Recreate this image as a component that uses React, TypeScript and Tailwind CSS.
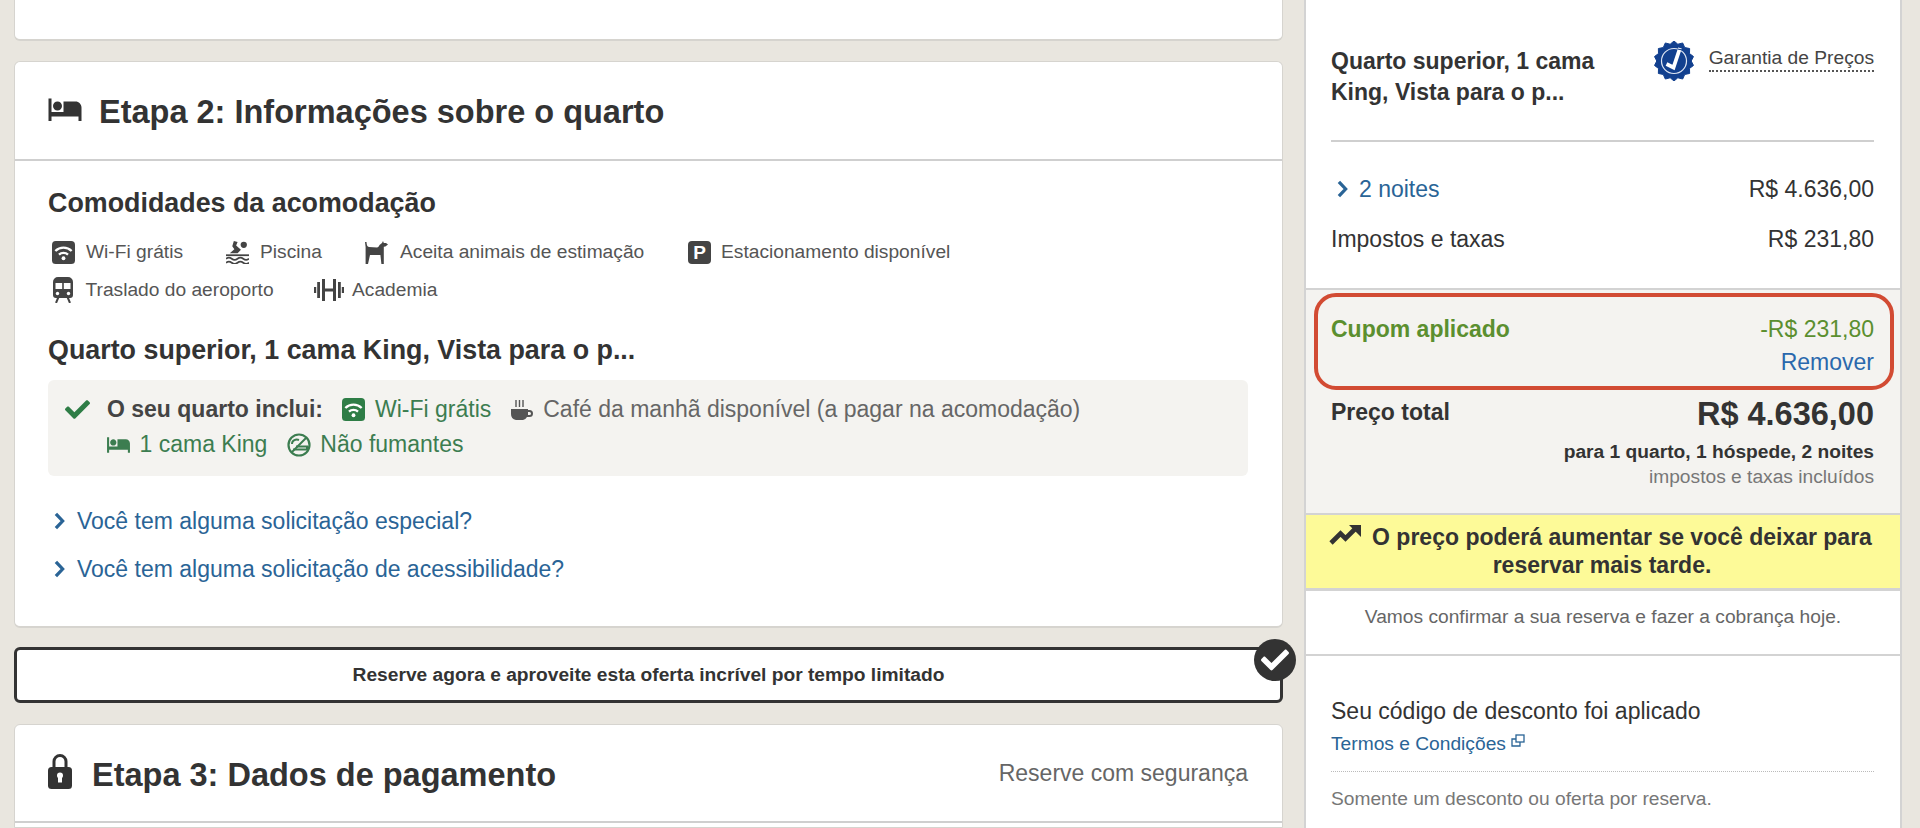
import { MdHotel } from "react-icons/md";
import { FaCheck } from "react-icons/fa";

function Wifi({ className }: { className?: string }) {
  return (
    <svg viewBox="0 0 24 24" className={className}>
      <rect x="0" y="0" width="24" height="24" rx="4" fill="currentColor" />
      <path d="M3.5 10.5a12 12 0 0 1 17 0" stroke="#fff" strokeWidth="2.4" fill="none" />
      <path d="M7.3 14.2a6.8 6.8 0 0 1 9.4 0" stroke="#fff" strokeWidth="2.4" fill="none" />
      <circle cx="12" cy="18" r="2" fill="#fff" />
    </svg>
  );
}

function Pool({ className }: { className?: string }) {
  return (
    <svg viewBox="0 0 22 22" className={className}>
      <circle cx="17" cy="3.6" r="3" fill="currentColor" />
      <path d="M7.5 0l3.6 1-1.4 3.2 4.6 4.2-3.2 3.2H3.6l4.4-3.6L6 5z" fill="currentColor" />
      <path d="M0 13.6h22" stroke="currentColor" strokeWidth="1.7" />
      <path
        d="M0 17c2-1.6 3.500-1.600 5.500 0s3.500 1.600 5.500 0 3.500-1.600 5.500 0 3.500 1.600 5.500 0M0 20.800c2-1.600 3.500-1.600 5.500 0s3.500 1.600 5.500 0 3.500-1.600 5.500 0 3.500 1.600 5.500 0"
        stroke="currentColor"
        strokeWidth="1.6"
        fill="none"
      />
    </svg>
  );
}

function Dog({ className }: { className?: string }) {
  return (
    <svg viewBox="0 0 23 23" className={className} fill="currentColor">
      <path d="M0 1h1.500c.2 3 .6 4.500 2.500 5l8 .5c1 0 2-1 2.500-2.500L17 2l1-2 .8 2H21l2 1.600-2.600 1.800-1.600.3V23h-2.400l-1-9H5l-2 9H.6V6z" />
    </svg>
  );
}

function Train({ className }: { className?: string }) {
  return (
    <svg viewBox="0 0 20 26" className={className} fill="currentColor">
      <path
        fillRule="evenodd"
        d="M5 0h10a5 5 0 0 1 5 5v13a3 3 0 0 1-3 3H3a3 3 0 0 1-3-3V5a5 5 0 0 1 5-5zM2.500 6v6h6.700V6zm8.300 0v6h6.700V6z"
      />
      <circle cx="4.500" cy="16.500" r="1.700" fill="#fff" />
      <circle cx="15.500" cy="16.500" r="1.700" fill="#fff" />
      <path d="M5.500 20 3 26M14.500 20l2.500 6" stroke="currentColor" strokeWidth="2" />
    </svg>
  );
}

function Gym({ className }: { className?: string }) {
  return (
    <svg viewBox="0 0 30 22" className={className} fill="currentColor">
      <rect x="0" y="8" width="2.200" height="6" />
      <rect x="3.200" y="3" width="2.800" height="16" />
      <rect x="8" y="0" width="3" height="22" />
      <rect x="11" y="9.500" width="8" height="3" />
      <rect x="19" y="0" width="3" height="22" />
      <rect x="24" y="3" width="2.800" height="16" />
      <rect x="27.800" y="8" width="2.200" height="6" />
    </svg>
  );
}

function Cup({ className }: { className?: string }) {
  return (
    <svg viewBox="0 0 24 24" className={className} fill="currentColor">
      <path d="M1 11h17v1h1.500a3.500 3.500 0 0 1 0 7H17a6 6 0 0 1-4 3H6a6 6 0 0 1-5-6zM18 14v3h1.500a1.500 1.500 0 0 0 0-3z" />
      <path d="M6 2v7M9.500 2v7M13 2v7" stroke="currentColor" strokeWidth="1.400" fill="none" />
    </svg>
  );
}

function NoSmoke({ className }: { className?: string }) {
  return (
    <svg viewBox="0 0 24 24" className={className} fill="none" stroke="currentColor">
      <circle cx="12" cy="12" r="10.500" strokeWidth="2.200" />
      <path d="M5 19 19 5" strokeWidth="2" />
      <path d="M9 13.500h11v3H6" strokeWidth="2" />
      <path d="M5 11c0-4 4-5 7-4" strokeWidth="2" />
    </svg>
  );
}

function Lock({ className }: { className?: string }) {
  return (
    <svg viewBox="0 0 24 35" className={className}>
      <path d="M6 14V7.500a6 6 0 0 1 12 0V14" stroke="currentColor" strokeWidth="3" fill="none" />
      <rect x="0" y="13" width="24" height="22" rx="3.500" fill="currentColor" />
      <circle cx="12" cy="21.500" r="3" fill="#fff" />
      <rect x="10" y="22" width="4" height="6.500" fill="#fff" />
    </svg>
  );
}

function Chevron({ className }: { className?: string }) {
  return (
    <svg viewBox="0 0 12 20" className={className} fill="none" stroke="currentColor" strokeWidth="3.600">
      <path d="M2 2l7.500 8L2 18" />
    </svg>
  );
}

function Trend({ className }: { className?: string }) {
  return (
    <svg viewBox="0 0 32 20" className={className}>
      <path d="M2 18l9.500-9.500 5 5L26 4" fill="none" stroke="currentColor" strokeWidth="4.600" />
      <path d="M20 0h12v12z" fill="currentColor" />
    </svg>
  );
}

const badgePoints = Array.from({ length: 28 }, (_, i) => {
  const r = i % 2 === 0 ? 20 : 17.2;
  const a = (i * Math.PI) / 14;
  return `${20 + r * Math.sin(a)},${20 - r * Math.cos(a)}`;
}).join(" ");

function Badge({ className }: { className?: string }) {
  return (
    <svg viewBox="0 0 40 40" className={className}>
      <polygon points={badgePoints} fill="#12408f" stroke="#12408f" strokeWidth="1" strokeLinejoin="round" />
      <circle cx="20" cy="20" r="12.500" fill="none" stroke="#dfe6f3" strokeWidth="1.200" />
      <path d="M12.500 23l7 3.500L26 7" fill="none" stroke="#fff" strokeWidth="3.800" />
      <path d="M23.500 8l5 1" fill="none" stroke="#12408f" strokeWidth="1.200" />
    </svg>
  );
}

function External({ className }: { className?: string }) {
  return (
    <svg viewBox="0 0 14 14" className={className} fill="none" stroke="currentColor" strokeWidth="1.300">
      <rect x="5" y="1" width="8" height="7" />
      <path d="M5 5H1v7h8V8" />
    </svg>
  );
}

function Parking({ className }: { className?: string }) {
  return (
    <div className={className}>
      <span className="font-bold text-white text-[19px] leading-none">P</span>
    </div>
  );
}

function Amenity({ icon, label, className }: { icon: React.ReactNode; label: string; className?: string }) {
  return (
    <div className={"flex items-center " + (className ?? "")}>
      {icon}
      <span>{label}</span>
    </div>
  );
}

export default function App() {
  return (
    <div className="h-[828px] overflow-hidden flex pl-[14px] bg-[#e9e6df] text-[#333] font-['Liberation_Sans',Arial,sans-serif]">
      <div className="w-[1269px] flex flex-col shrink-0">
        <div className="h-[41px] shrink-0 bg-white border-x border-b-2 border-[#d6d4cf] rounded-b-md" />

        <div className="mt-[20px] h-[567px] shrink-0 bg-white border border-b-2 border-[#d6d4cf] rounded-md">
          <div className="h-[99px] flex items-center pl-[33px] border-b-2 border-[#cfcfcf]">
            <MdHotel className="w-[36px] h-[36px] -mt-[4px] -ml-[1.5px] mr-[16.5px]" />
            <h2 className="mt-[4px] text-[32.5px] font-bold">Etapa 2: Informações sobre o quarto</h2>
          </div>
          <div className="pl-[33px] pr-[34px]">
            <h3 className="mt-[27px] text-[26.85px] leading-[30px] font-bold">Comodidades da acomodação</h3>
            <div className="mt-[15px] h-[38px] flex text-[19.2px] text-[#555]">
              <Amenity
                className="ml-[4px] w-[174px]"
                label="Wi-Fi grátis"
                icon={<Wifi className="w-[23px] h-[23px] mr-[11px] text-[#444]" />}
              />
              <Amenity
                className="w-[139px]"
                label="Piscina"
                icon={<Pool className="w-[23px] h-[23px] mr-[11px] text-[#444]" />}
              />
              <Amenity
                className="w-[323px]"
                label="Aceita animais de estimação"
                icon={<Dog className="w-[23px] h-[23px] mr-[12px] text-[#444]" />}
              />
              <Amenity
                label="Estacionamento disponível"
                icon={
                  <Parking className="w-[23px] h-[23px] mr-[10px] rounded bg-[#444] flex items-center justify-center" />
                }
              />
            </div>
            <div className="h-[38px] flex text-[19.2px] text-[#555]">
              <Amenity
                className="ml-[5px] w-[261px]"
                label="Traslado do aeroporto"
                icon={<Train className="w-[20px] h-[26px] mr-[12.5px] text-[#444]" />}
              />
              <Amenity
                label="Academia"
                icon={<Gym className="w-[30px] h-[22px] mr-[8px] text-[#444]" />}
              />
            </div>

            <h3 className="mt-[26px] text-[26.85px] leading-[30px] font-bold">Quarto superior, 1 cama King, Vista para o p...</h3>
            <div className="mt-[15px] h-[96px] bg-[#f4f3f0] rounded-md pl-[17px] pt-[12px] text-[23px] leading-[35px] text-[#666]">
              <div className="flex items-center">
                <FaCheck className="w-[25px] h-[25px] text-[#2e7d46] mr-[17px]" />
                <span className="font-bold text-[#444] mr-[19px]">O seu quarto inclui:</span>
                <Wifi className="w-[23px] h-[23px] text-[#2e7d46] mr-[10px]" />
                <span className="text-[#3c7d50] mr-[19px]">Wi-Fi grátis</span>
                <Cup className="w-[24px] h-[26px] text-[#555] mr-[9px]" />
                <span>Café da manhã disponível (a pagar na acomodação)</span>
              </div>
              <div className="flex items-center ml-[40.5px] text-[#3c7d50]">
                <MdHotel className="w-[25px] h-[25px] mr-[9px]" />
                <span className="mr-[19.5px]">1 cama King</span>
                <NoSmoke className="w-[24px] h-[24px] mr-[9.5px]" />
                <span>Não fumantes</span>
              </div>
            </div>
            <div className="mt-[21px] h-[48px] flex items-center text-[23px] text-[#2a6496]">
              <Chevron className="w-[11px] h-[18px] ml-[6px] mr-[12px]" />
              Você tem alguma solicitação especial?
            </div>
            <div className="h-[48px] flex items-center text-[23px] text-[#2a6496]">
              <Chevron className="w-[11px] h-[18px] ml-[6px] mr-[12px]" />
              Você tem alguma solicitação de acessibilidade?
            </div>
          </div>
        </div>

        <div className="relative mt-[19px] h-[56px] shrink-0 bg-white border-[3px] border-[#333] rounded-md flex items-center justify-center text-[19.2px] font-bold">
          Reserve agora e aproveite esta oferta incrível por tempo limitado
          <div className="absolute -right-[16px] -top-[11px] w-[42px] h-[42px] rounded-full bg-[#333] flex items-center justify-center">
            <FaCheck className="w-[28px] h-[28px] text-white" />
          </div>
        </div>

        <div className="mt-[21px] flex-1 bg-white border border-[#d6d4cf] rounded-t-md">
          <div className="h-[98px] flex items-center justify-between pl-[33px] pr-[34px] border-b-2 border-[#cfcfcf]">
            <div className="flex items-center">
              <Lock className="w-[24px] h-[35px] mr-[20px] -mt-[4px]" />
              <h2 className="mt-[4px] text-[32.5px] font-bold">Etapa 3: Dados de pagamento</h2>
            </div>
            <span className="text-[23px] text-[#666]">Reserve com segurança</span>
          </div>
        </div>
      </div>

      <div className="ml-[21px] w-[598px] shrink-0 flex flex-col bg-white border-x-2 border-[#d3d3d3]">
        <div className="h-[290px] shrink-0 pl-[25px] pr-[26px] border-b-2 border-[#d3d3d3]">
          <div className="h-[142px] flex justify-between border-b-2 border-[#cfcfcf] pt-[46px]">
            <div className="w-[300px] text-[23px] leading-[31px] font-bold">Quarto superior, 1 cama King, Vista para o p...</div>
            <div className="flex items-start -mt-[5px]">
              <Badge className="w-[40px] h-[40px] mr-[15px]" />
              <span className="mt-[5px] h-[26px] text-[19.2px] leading-[24px] text-[#444] border-b-2 border-dotted border-[#555]">Garantia de Preços</span>
            </div>
          </div>
          <div className="mt-[32px] flex justify-between text-[23px] leading-[30px]">
            <span className="flex items-center text-[#2a6496]">
              <Chevron className="w-[11px] h-[18px] ml-[6px] mr-[11px]" />2 noites
            </span>
            <span>R$ 4.636,00</span>
          </div>
          <div className="mt-[20px] flex justify-between text-[23px] leading-[30px]">
            <span>Impostos e taxas</span>
            <span>R$ 231,80</span>
          </div>
        </div>

        <div className="h-[225px] shrink-0 bg-[#f4f3f0] border-b-2 border-[#d3d3d3] pl-[8px] pr-[6px] pt-[3px]">
          <div className="h-[97px] border-4 border-[#d24b33] rounded-[22px] pl-[13px] pr-[16px] pt-[17px]">
            <div className="flex justify-between text-[23px] leading-[30px] text-[#5b8f2f]">
              <span className="font-bold">Cupom aplicado</span>
              <span>-R$ 231,80</span>
            </div>
            <div className="mt-[3px] text-right text-[23px] leading-[30px] text-[#2a68ad]">Remover</div>
          </div>
          <div className="pl-[17px] pr-[20px]">
            <div className="mt-[1.5px] flex justify-between items-start">
              <span className="mt-[5px] text-[23px] leading-[30px] font-bold">Preço total</span>
              <span className="text-[32.5px] leading-[44px] font-bold">R$ 4.636,00</span>
            </div>
            <div className="mt-[4px] text-right text-[19.2px] leading-[24px] font-bold">para 1 quarto, 1 hóspede, 2 noites</div>
            <div className="text-right text-[19.2px] leading-[25px] text-[#777]">impostos e taxas incluídos</div>
          </div>
        </div>

        <div className="h-[76px] shrink-0 bg-[#fdfa98] border-b-[3px] border-[#d3d3d3] pt-[9px] text-center text-[23px] leading-[27px] font-bold">
          <div className="flex items-center justify-center pr-[5px]">
            <Trend className="w-[32px] h-[20px] -mt-[6px] mr-[11px]" />O preço poderá aumentar se você deixar para
          </div>
          <div className="mt-[1px] pr-[2px]">reservar mais tarde.</div>
        </div>

        <div className="h-[65px] shrink-0 pb-[10px] flex items-center justify-center border-b-2 border-[#d3d3d3] text-[19.2px] text-[#666]">
          Vamos confirmar a sua reserva e fazer a cobrança hoje.
        </div>

        <div className="pl-[25px] pr-[26px] pt-[40px]">
          <div className="text-[23px] leading-[30px]">Seu código de desconto foi aplicado</div>
          <div className="mt-[6px] flex items-start text-[19.2px] leading-[24px] text-[#2a6496]">
            Termos e Condições
            <External className="w-[14px] h-[14px] ml-[5px] mt-[2px]" />
          </div>
          <div className="mt-[15px] border-t border-dotted border-[#bbb]" />
          <div className="mt-[15px] text-[19.2px] leading-[24px] text-[#777]">Somente um desconto ou oferta por reserva.</div>
        </div>
      </div>
    </div>
  );
}
